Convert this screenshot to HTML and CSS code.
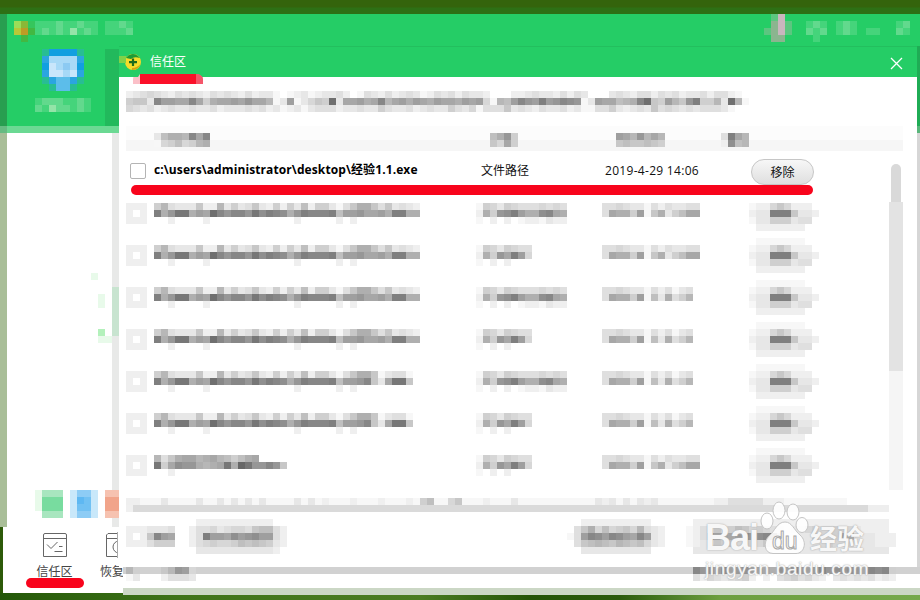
FILE: index.html
```html
<!DOCTYPE html>
<html lang="zh-CN">

<head>
    <meta charset="UTF-8">
    <meta name="viewport" content="width=device-width, initial-scale=1.0">
    <title>信任区</title>
    <link rel="stylesheet" href="styles.css">
</head>

<body>
    <div class="desktop">
        <div class="main-window">
            <div class="main-header">
                <div class="edge"></div>
                <div class="brand">
                    <div class="mosaic" data-cells="ABFGGGHGGHGG.GGHG/CDEGHGHGIGHG.GGGH/.E..............."></div>
                    <div class="account">
                        <div class="mosaic" data-cells="....../ONNNNO/LJJJJL/NKJSJN/LKKJKL/OLMMLO/.OMMO."></div>
                        <div class="mosaic" data-cells="GHHHGGHG/HGIHHGHG"></div>
                    </div>
                </div>
                <div class="window-tools">
                    <div class="mosaic pet" data-cells="..../.QR./.PRQ/QPRQ/.PP."></div>
                    <div class="mosaic tool" data-cells="GHG/HGH/.G."></div>
                    <div class="mosaic tool" data-cells="GHG/GHG/..."></div>
                    <div class="mosaic tool" data-cells=".../GG./..."></div>
                    <div class="mosaic tool" data-cells="GH./HG./..."></div>
                </div>
            </div>
            <div class="main-fade"></div>
            <div class="main-body">
                <div class="side-mark">
                    <div class="mosaic" data-cells=".T......../........../........../..T......./..T......./........../........../........../..U......./..TT......"></div>
                </div>
                <div class="mosaic swatches" data-cells="TVVV.WXXW.YY/TZZZ.WabW.cc/TZZZ.WbbW.cc/.VVV.WXXW.YY"></div>
            </div>
            <div class="dock">
                <div class="dock-item">
                    <svg class="dock-icon" width="26" height="26" viewBox="0 0 26 26">
                        <path d="M3 1.5H23Q24.500 1.500 24.500 3V24.500H1.500V3Q1.500 1.500 3 1.500ZM1.500 6.500H24.500M5 12.500L9 16.500L15.500 10M17 14.500H20.500M12.500 19.500H20.500" />
                    </svg>
                    <span>信任区</span>
                </div>
                <div class="dock-item">
                    <div class="dock-clip">
                        <svg class="dock-icon" width="26" height="26" viewBox="0 0 26 26">
                            <path d="M3 1.500H24.500V24.500H1.500V3ZM1.500 6.500H24.500" />
                            <circle cx="14" cy="15" r="6" />
                        </svg>
                    </div>
                    <span>恢复</span>
                </div>
            </div>
        </div>

        <div class="header-shade"></div>
        <div class="edge-strip"></div>
        <div class="modal">
            <div class="modal-title">
                <svg class="logo" width="23" height="18" viewBox="-5 0 23 18">
                    <circle cx="9" cy="9" r="8" fill="#f5dc2a" />
                    <path d="M2 5A8 8 0 0 1 14 3L16 5Q10 3 7 6Z" fill="#1d9a35" />
                    <path d="M8 17A8 8 0 0 0 16.500 11Q13 15 8 15Z" fill="#d4a514" />
                    <path d="M9 5.500V13M5 9.200H13" stroke="#1d6b1c" stroke-width="2.200" />
                    <rect x="-5" y="3" width="7" height="7" fill="#80d248" />
                </svg>
                <span class="modal-name">信任区</span>
                <svg class="close" width="13" height="13" viewBox="0 0 13 13">
                    <path d="M1 1L12 12M12 1L1 12" />
                </svg>
            </div>
            <div class="modal-body">
                <div class="mosaic notice" data-cells="tsrqrstrsrstrsrstrtssu.utsutssrtvurstrtsrsutrsrtrsstvv.ttsrsstrtrsv..srstrrtrsrtssrtrrtu/poosgjjkkgkplkkjkikkmusjusqopdskkjlkgmkjljkljkkljkjqumnjgijfjighiusjkknmlgdopjmoifppmsdmu/qrsrtsrssrssrtsssrsrtsutsusrrrtssrssprssrtsrssprsqurrrosrstrssrtsuurrpstsrsorqrsrsrrrsu"></div>

                <div class="table-head">
                    <div class="mosaic col-path" data-cells="snllmgkg/uqpnqpml"></div>
                    <div class="mosaic col-type" data-cells="nlip/oqkp"></div>
                    <div class="mosaic col-date" data-cells="jkmimkm/onoonop"></div>
                    <div class="mosaic col-action" data-cells="rfkm/thnm"></div>
                </div>

                <div class="list">
                    <div class="rows" id="rows">
                        <div class="row current">
                            <span class="checkbox"></span>
                            <span class="path">c:\users\administrator\desktop\经验1.1.exe</span>
                            <span class="type">文件路径</span>
                            <span class="date">2019-4-29 14:06</span>
                            <button class="remove">移除</button>
                        </div>
                    </div>
                    <div class="scrollbar">
                        <div class="thumb-top"></div>
                        <div class="thumb"></div>
                    </div>
                </div>

                <div class="mosaic cut-row" data-cells="ttuuusuuuusuususususuuuususutuuutuuutuuutupnuuqouuutuuusuuuuuuuuuuustsusustsuuuuuuuuttrrrrrtttuuuuuuuuu"></div>
                <div class="divider"></div>

                <div class="footer">
                    <div class="mosaic" data-cells=".../tttsssr/tvtogjk/tttrppp/......"></div>
                    <div class="mosaic clear" data-cells=".ttttttttttt../trrqsrqqronnrt/trfjjkhjihjjrt/trqpqqpnonopst/.ssssssssssst."></div>
                    <div class="mosaic add" data-cells="..tttttttttt../.rolqnqpoqmrst/urjghjghjkgjst/.ronmnomnonqst/..ssssssssss.."></div>
                    <div class="mosaic add-file" data-cells=".tttttttttttttttttttttttttttt./utrqoqpnoqpqrstssqpqqppqstttt./utrhjjkigihgeottssoqppgkrssttt/utsqopnqopqoqrtttsrqpqqpsssttt/.ssssssssssssssssssssssssssss."></div>
                </div>
            </div>
        </div>
        <div class="modal-bottom"></div>
        <div class="mosaic bottom-text left" data-cells="mp...omijq/us...trrrs"></div>
        <div class="mosaic bottom-text right" data-cells="gihjgjihijklhjgijigihihikghgp/rtqrsrqpt.t.rqprqst.srsrsrtst"></div>
        <div class="ground-strip"></div>

        <div class="mark mark-title"></div>
        <div class="mark mark-row"></div>
        <div class="mark mark-dock"></div>

        <div class="watermark">
            <div class="wm-logo">
                <span class="wm-bai">Bai</span>
                <svg class="wm-paw" width="50" height="54" viewBox="0 0 50 54">
                    <ellipse cx="7" cy="20" rx="6" ry="8" />
                    <ellipse cx="19" cy="9.500" rx="6" ry="8.500" />
                    <ellipse cx="33" cy="11" rx="6" ry="8" />
                    <ellipse cx="42" cy="24" rx="6" ry="7.500" />
                    <path d="M25 21C32 21 34 29 40 34C48 41 44 52.500 36 52.500H13C4 52.500 3 41 9 35C15 30 17 21 25 21Z" />
                    <text x="12" y="48">du</text>
                </svg>
                <span class="wm-cn">经验</span>
            </div>
            <div class="wm-url">jingyan.baidu.com</div>
        </div>
    </div>
    <script src="mosaic.js"></script>
</body>

</html>
```

FILE: styles.css
```css
html,
body {
    margin: 0;
    padding: 0;
}

body {
    width: 920px;
    height: 600px;
    overflow: hidden;
    font-family: "Noto Sans CJK SC", sans-serif;
    font-size: 12px;
    color: #111;
}

.desktop {
    position: relative;
    box-sizing: border-box;
    height: 600px;
    padding-top: 14px;
    overflow: hidden;
    background: linear-gradient(#34640c 0, #34640c 7px, #2d7015 8px, #2d7015 14px, #2d5a09 15px);
}

.mosaic {
    flex: none;
    line-height: 0;
}

.mosaic svg {
    display: block;
}

/* main window */
.main-header {
    display: flex;
    height: 112px;
    background: #25cd66;
}

.edge {
    width: 7px;
    background: #289e50;
}

.brand {
    width: 500px;
    padding: 7px 0 0 7px;
}

.account {
    display: flex;
    flex-direction: column;
    gap: 7px;
    padding-left: 21px;
}

.account .mosaic:first-child {
    padding-left: 7px;
}

.window-tools {
    display: flex;
    margin-left: auto;
    padding-right: 3px;
}

.pet {
    margin-top: -7px;
    margin-right: 14px;
}

.tool {
    margin-top: 7px;
    margin-right: 9px;
}

.tool:last-child {
    margin-right: 0;
}

.main-fade {
    height: 7px;
    background: linear-gradient(90deg, #67bb82 7px, #6bd993 7px);
}

.main-body {
    display: flex;
    flex-direction: column;
    box-sizing: border-box;
    height: 394px;
    background: linear-gradient(90deg, #a9be98 7px, #fff 7px);
}

.side-mark {
    height: 357px;
    padding: 140px 0 0 84px;
    box-sizing: border-box;
}

.swatches {
    position: relative;
    z-index: 1;
    padding-left: 35px;
}

.dock {
    display: flex;
    box-sizing: border-box;
    height: 66px;
    margin-left: 3px;
    padding: 5px 0 0 19px;
    background: #fff;
}

.dock-item {
    width: 65px;
    display: flex;
    flex-direction: column;
    align-items: center;
    color: #444;
    line-height: 18px;
}

.dock-item span {
    margin-top: 4px;
}

.dock-item + .dock-item {
    align-items: flex-start;
    margin-left: 12px;
}

.dock-item + .dock-item span {
    margin-left: 1px;
}

.dock-clip {
    width: 12px;
    margin-left: 6px;
    overflow: hidden;
    height: 26px;
    border-right: 1px solid #aaa;
}

.dock-icon {
    display: block;
    fill: none;
    stroke: #666;
    stroke-width: 1;
}

/* shadow between the two windows */
.header-shade {
    position: absolute;
    left: 105px;
    top: 49px;
    width: 14px;
    height: 77px;
    background: #22b95c;
}

.edge-strip {
    position: absolute;
    left: 112px;
    top: 133px;
    width: 7px;
    height: 394px;
    background: linear-gradient(#e8e9e8 0, #e8e9e8 154px, #c8e4d0 154px, #c8e4d0 203px, #e8e9e8 203px);
}

/* dialog */
.modal {
    position: absolute;
    left: 119px;
    top: 46px;
    width: 798px;
    height: 521px;
    background: #fff;
    box-shadow: 3px 0 0 rgba(0, 0, 0, .16);
}

.modal-title {
    display: flex;
    align-items: center;
    box-sizing: border-box;
    height: 31px;
    padding: 0 14px 1px 0;
    border-top: 1px solid #23bf5e;
    background: #25cd66;
    color: #fff;
}

.modal-name {
    margin: -1px 0 0 8px;
    line-height: 18px;
}

.close {
    margin: 4px 0 0 auto;
    fill: none;
    stroke: #fff;
    stroke-width: 1.3;
}

.modal-body {
    padding: 14px 0 0 7px;
}

.notice {
    height: 21px;
}

.table-head {
    display: grid;
    grid-template-columns: 336px 126px 105px 1fr;
    box-sizing: border-box;
    width: 777px;
    height: 25px;
    margin-top: 14px;
    padding: 7px 0 0 28px;
    background: linear-gradient(#fcfcfc 14px, #f6f6f6 14px);
}

.list {
    display: flex;
    height: 346px;
}

.rows {
    width: 763px;
}

.row {
    display: grid;
    grid-template-columns: 28px 322px 126px 147px 1fr;
    height: 42px;
}

.row.current {
    box-sizing: border-box;
    height: 45px;
    align-items: center;
    padding: 0 0 5px;
}

.checkbox {
    width: 14px;
    height: 14px;
    margin-left: 4px;
    border: 1px solid #b4b4b4;
    border-radius: 2px;
}

.path {
    margin-top: -2px;
    font-family: "Open Sans", "Noto Sans CJK SC", sans-serif;
    font-weight: bold;
    font-size: 12px;
    line-height: 18px;
    letter-spacing: .1px;
    white-space: nowrap;
    color: #000;
}

.type {
    margin-top: -2px;
    padding-left: 5px;
    line-height: 18px;
}

.date {
    margin-top: -2px;
    padding-left: 3px;
    font-family: "Open Sans", sans-serif;
    font-size: 12px;
    letter-spacing: .3px;
}

.remove {
    width: 63px;
    height: 26px;
    margin: 1px 0 0 2px;
    padding: 0 0 1px;
    border: 1px solid #c6c6c6;
    border-radius: 13px;
    background: linear-gradient(#f7f7f7, #dfdfdf);
    font: 12px "Noto Sans CJK SC", sans-serif;
    color: #111;
}

.scrollbar {
    width: 14px;
    height: 326px;
    margin-top: 13px;
    background: linear-gradient(#fff 38px, #f5f5f5 38px);
}

.thumb-top {
    width: 10px;
    height: 38px;
    margin: 0 auto;
    background: #d9d9d9;
    border-radius: 5px 5px 0 0;
}

.thumb {
    height: 169px;
    background: #e3e3e3;
}

.cut-row {
    height: 7px;
    margin-top: 1px;
}

.divider {
    width: 763px;
    height: 7px;
    background: linear-gradient(90deg, #f0f0f0 7px, #dadada 7px, #dadada 742px, #eee 742px);
}

.footer {
    display: flex;
    padding-top: 7px;
}

.clear {
    margin-left: 14px;
}

.add {
    margin-left: 280px;
}

.add-file {
    margin-left: 21px;
}

.modal-bottom {
    position: absolute;
    left: 123px;
    top: 567px;
    width: 797px;
    height: 21px;
    background: linear-gradient(#d1d1d1 7px, #fff 7px);
}

.bottom-text {
    position: absolute;
    top: 567px;
}

.bottom-text.left {
    left: 126px;
}

.bottom-text.right {
    left: 693px;
}

.ground-strip {
    position: absolute;
    left: 0;
    right: 0;
    top: 593px;
    height: 7px;
    background: linear-gradient(90deg, #245809, #3f7419 180px, #4b7c22 420px, #245407 530px, #2b5c0c 620px, #6d9f40 720px, #75a94b);
}

.ground-strip::before {
    content: "";
    position: absolute;
    left: 123px;
    right: 0;
    top: -5px;
    height: 7px;
    background: #cbd7c5;
}

/* red marker lines */
.mark {
    position: absolute;
    background: #f8041c;
    border-radius: 5px;
}

.mark-title {
    left: 133px;
    top: 74px;
    width: 70px;
    height: 10px;
    border-radius: 5px 5px 0 0;
    background: linear-gradient(90deg, #fbc0c8 7px, #fb1029 7px, #fb1029 63px, #f5566a 63px);
    clip-path: polygon(0 3px, 5px 3px, 7px 0, 66px 0, 70px 3px, 70px 10px, 0 10px);
}

.mark-row {
    left: 131px;
    top: 185px;
    width: 682px;
    height: 10px;
}

.mark-dock {
    left: 26px;
    top: 578px;
    width: 58px;
    height: 10px;
}

.watermark {
    position: absolute;
    left: 705px;
    top: 501px;
    color: rgba(255, 255, 255, .92);
    text-shadow: 0 0 1px #aaa, 0 0 2px #bbb;
}

.wm-logo {
    display: flex;
    height: 54px;
    align-items: flex-end;
}

.wm-bai {
    width: 55px;
    font: bold 36px/34px "Liberation Sans", sans-serif;
    letter-spacing: -1px;
}

.wm-paw {
    fill: rgba(255, 255, 255, .9);
    stroke: #c4c4c4;
    stroke-width: 1;
}

.wm-paw text {
    font: 23px "Liberation Sans", sans-serif;
    fill: #fff;
    stroke: #aaa;
    text-shadow: none;
}

.wm-cn {
    font-size: 27px;
    font-weight: bold;
    line-height: 35px;
}

.wm-url {
    margin-top: 3px;
    font: 19px/22px "Liberation Sans", sans-serif;
    letter-spacing: .65px;
    color: rgba(255, 255, 255, .92);
}
```

FILE: mosaic.js
```js
// cell size of the pixelated areas
const CELL = 7;
// upper case letters (and a few extra) are tints, the rest is a grey level in base 32
const TINTS = {
    A: "#9bdd58", B: "#8ab837", C: "#b7c837", D: "#bc9c25", E: "#42b842", F: "#35c65c",
    G: "#45d47b", H: "#62d98d", I: "#94e4a8",
    J: "#a7d9f7", K: "#c9e6fb", L: "#2ba5e0", M: "#5cbdea", N: "#129fe0", O: "#28bd94",
    P: "#8bb58f", Q: "#5cc680", R: "#c9b6be", S: "#8ccaf2",
    T: "#e8faea", U: "#b3f1bb", V: "#a8e6bf", Z: "#78dc9f",
    W: "#c9e8fa", X: "#8dccf5", Y: "#f6c2b0"
};
const EXTRA = { a: "#5eb8f2", b: "#71c1f3", c: "#f1a48a" };

function draw(el) {
    const lines = el.dataset.cells.split("/");
    const tinted = /[A-Z]/.test(el.dataset.cells);
    const width = Math.max(...lines.map(l => l.length)) * CELL;
    let rects = "";
    lines.forEach((line, y) => {
        [...line].forEach((ch, x) => {
            if (ch === ".") return;
            const level = parseInt(ch, 32) * 8 + 7;
            const fill = TINTS[ch] || (tinted && EXTRA[ch]) || `rgb(${level},${level},${level})`;
            rects += `<rect x="${x * CELL}" y="${y * CELL}" width="${CELL}" height="${CELL}" fill="${fill}"/>`;
        });
    });
    el.innerHTML = `<svg width="${width}" height="${lines.length * CELL}" shape-rendering="crispEdges">${rects}</svg>`;
}

const CHECK = ["", "ttt", "tvt", "ttt"];
const PATH = [
    "",
    "pmrsssottmspsrostptpsntppsurollorosrst",
    "flieeljkdgiggiehfghlifgggfnjjikkjlffll",
    "..t....t............t.....t.t........."
];
const PATH_SHORT = [
    "",
    "pmrsssottmspsrostptpsntppsurollousrru",
    "flieeljkdgiggiehfghlifgggfnjjigoskeeo",
    PATH[3].slice(0, 37)
];
const PATH_DRIVE = ["", "mrolkkmlkmnpnlk", "epkhiilmlkelceiigio", "..t........"];
const TYPE_LONG = ["", "upqspqrrrqrqr", "tlpihfjllhgkl", "u.t.t.uttustt"];
const TYPE = ["", "upqspqrr", "tlpikfjq", "u.t.t..."];
const DATE_LONG = ["", "rrqrssurtrssrr", "rkllpjuolspnkk"];
const DATE = ["", "rrqrssurtrusr", "rkllpjunslrpm"];
const BUTTON = [".uuuuuuu..", "uttqoqttt.", "tssfffosst", "usspppsrr.", ".ttttttt.."];

const rows = document.getElementById("rows");
const items = [
    [PATH, TYPE_LONG, DATE_LONG],
    [PATH, TYPE, DATE_LONG],
    [PATH, TYPE_LONG, DATE],
    [PATH, TYPE, DATE],
    [PATH_SHORT, TYPE_LONG, DATE],
    [PATH_SHORT, TYPE, DATE],
    [PATH_DRIVE, TYPE, DATE_LONG]
];
items.forEach((item, i) => {
    const row = document.createElement("div");
    row.classList.add("row");
    [CHECK, ...item, i ? BUTTON : ["", ...BUTTON.slice(1)]].forEach(cells => {
        const cell = document.createElement("div");
        cell.classList.add("mosaic");
        cell.dataset.cells = cells.join("/");
        row.appendChild(cell);
    });
    rows.appendChild(row);
});

document.querySelectorAll(".mosaic").forEach(draw);
```
